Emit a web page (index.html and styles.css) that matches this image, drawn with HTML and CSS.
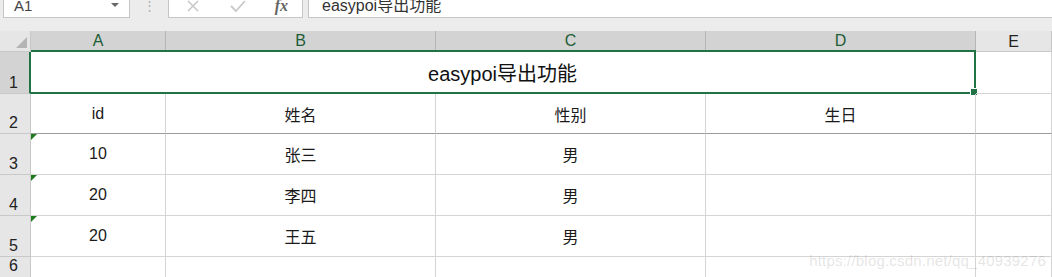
FILE: index.html
```html
<!DOCTYPE html>
<html lang="zh">
<head>
<meta charset="utf-8">
<title>easypoi导出功能</title>
<link rel="stylesheet" href="styles.css">
</head>
<body>
<div class="app">
  <div class="formula-bar">
    <div class="name-box"><span>A1</span><span class="caret"></span></div>
    <div class="grip">⋮</div>
    <div class="fx-box">
      <svg class="ico" width="16" height="14" viewBox="0 0 16 14"><path d="M3 1 L13 11 M13 1 L3 11" stroke="#c8c8c8" stroke-width="1.6" fill="none"/></svg>
      <svg class="ico" width="18" height="14" viewBox="0 0 18 14"><path d="M2 6 L7 11 L16 1" stroke="#c8c8c8" stroke-width="1.8" fill="none"/></svg>
      <span class="fx">fx</span>
    </div>
    <div class="formula-input">easypoi导出功能</div>
  </div>

  <div class="sheet">
    <div class="corner"><span class="corner-tri"></span></div>
    <div class="colhead sel">A</div>
    <div class="colhead sel">B</div>
    <div class="colhead sel">C</div>
    <div class="colhead sel">D</div>
    <div class="colhead">E</div>

    <div class="rowhead sel">1</div>
    <div class="cell merged">easypoi导出功能</div>
    <div class="cell"></div>

    <div class="rowhead">2</div>
    <div class="cell thick">id</div>
    <div class="cell thick">姓名</div>
    <div class="cell thick">性别</div>
    <div class="cell thick">生日</div>
    <div class="cell thick"></div>

    <div class="rowhead">3</div>
    <div class="cell flag">10</div>
    <div class="cell">张三</div>
    <div class="cell">男</div>
    <div class="cell"></div>
    <div class="cell"></div>

    <div class="rowhead">4</div>
    <div class="cell flag">20</div>
    <div class="cell">李四</div>
    <div class="cell">男</div>
    <div class="cell"></div>
    <div class="cell"></div>

    <div class="rowhead">5</div>
    <div class="cell flag">20</div>
    <div class="cell">王五</div>
    <div class="cell">男</div>
    <div class="cell"></div>
    <div class="cell"></div>

    <div class="rowhead last">6</div>
    <div class="cell"></div>
    <div class="cell"></div>
    <div class="cell"></div>
    <div class="cell"></div>
    <div class="cell"></div>
  </div>
  <div class="watermark">https://blog.csdn.net/qq_40939276</div>
</div>
</body>
</html>
```

FILE: styles.css
```css
* { box-sizing: border-box; }
html, body { margin: 0; padding: 0; }
body {
  width: 1052px;
  height: 277px;
  overflow: hidden;
  background: #ececec;
  font-family: "Liberation Sans", "Noto Sans CJK SC", sans-serif;
  color: #222;
}
.app { position: relative; width: 1052px; height: 277px; }

/* formula bar */
.formula-bar {
  display: flex;
  align-items: stretch;
  height: 18px;
  margin-bottom: 13px;
}
.name-box {
  margin-left: 3px;
  width: 127px;
  background: #fff;
  border: 1px solid #c6c6c6;
  border-top: none;
  display: flex;
  align-items: flex-start;
  justify-content: space-between;
  padding: 0 8px 0 10px;
  font-size: 15px;
  line-height: 12px;
  color: #444;
}
.caret {
  width: 0; height: 0;
  border-left: 4px solid transparent;
  border-right: 4px solid transparent;
  border-top: 4px solid #666;
  margin: 3px 2px 0 0;
}
.grip {
  width: 38px;
  text-align: center;
  color: #b0b0b0;
  font-size: 13px;
  line-height: 12px;
}
.fx-box {
  width: 135px;
  background: #fff;
  border: 1px solid #c6c6c6;
  border-top: none;
  display: flex;
  align-items: flex-start;
  justify-content: space-between;
  padding: 0 14px 0 16px;
}
.fx {
  font-family: "Liberation Serif", serif;
  font-style: italic;
  font-weight: bold;
  font-size: 16px;
  line-height: 12px;
  color: #666;
}
.formula-input {
  flex: 1;
  margin-left: 5px;
  background: #fff;
  border: 1px solid #c6c6c6;
  border-top: none;
  border-right: none;
  padding: 0 0 0 13px;
  font-size: 16px;
  line-height: 12px;
  color: #333;
}

/* grid */
.sheet {
  display: grid;
  grid-template-columns: 31px 135px 270px 270px 270px 76px;
  grid-template-rows: 21px 42px 40px 41px 41px 41px 30px;
  background: #fff;
}
.corner {
  background: #e6e6e6;
  border-right: 1px solid #c8c8c8;
  border-bottom: 1px solid #c8c8c8;
  position: relative;
}
.corner-tri {
  position: absolute;
  right: 3px; bottom: 3px;
  width: 0; height: 0;
  border-left: 11px solid transparent;
  border-bottom: 11px solid #b4b4b4;
}
.colhead {
  background: #e6e6e6;
  border-right: 1px solid #c8c8c8;
  border-bottom: 1px solid #c8c8c8;
  display: flex;
  align-items: center;
  justify-content: center;
  font-size: 16px;
  color: #222;
  padding-top: 1px;
}
.colhead.sel {
  background: #d3d3d3;
  color: #1d5c35;
  border-right-color: #b6b6b6;
  border-bottom: 2px solid #217346;
}
.rowhead {
  background: #e6e6e6;
  border-right: 1px solid #c8c8c8;
  border-bottom: 1px solid #c8c8c8;
  display: flex;
  align-items: flex-end;
  padding-left: 9px;
  padding-bottom: 1px;
  font-size: 16px;
  line-height: 18px;
  color: #222;
}
.rowhead.last { align-items: flex-start; }
.rowhead.sel {
  background: #d3d3d3;
  border-right: 2px solid #217346;
}
.cell {
  border-right: 1px solid #d4d4d4;
  border-bottom: 1px solid #d4d4d4;
  display: flex;
  align-items: center;
  justify-content: center;
  font-size: 16px;
  color: #1a1a1a;
  position: relative;
}
.cell.thick { border-bottom-color: #9c9c9c; }
.cell.merged {
  grid-column: 2 / span 4;
  border: 2px solid #217346;
  border-left: none;
  margin-top: -2px;
  font-size: 20px;
  color: #111;
  padding-top: 1px;
}
.cell.merged::after {
  content: "";
  position: absolute;
  right: -4px;
  bottom: -4px;
  width: 6px;
  height: 6px;
  background: #217346;
  border: 1px solid #fff;
}
.cell.flag::before {
  content: "";
  position: absolute;
  left: 0; top: 0;
  width: 0; height: 0;
  border-top: 6px solid #1e7b1e;
  border-right: 6px solid transparent;
}
.watermark {
  position: absolute;
  right: 6px;
  bottom: 8px;
  font-size: 15px;
  color: rgba(120, 120, 120, 0.2);
  letter-spacing: 0.2px;
}
```
